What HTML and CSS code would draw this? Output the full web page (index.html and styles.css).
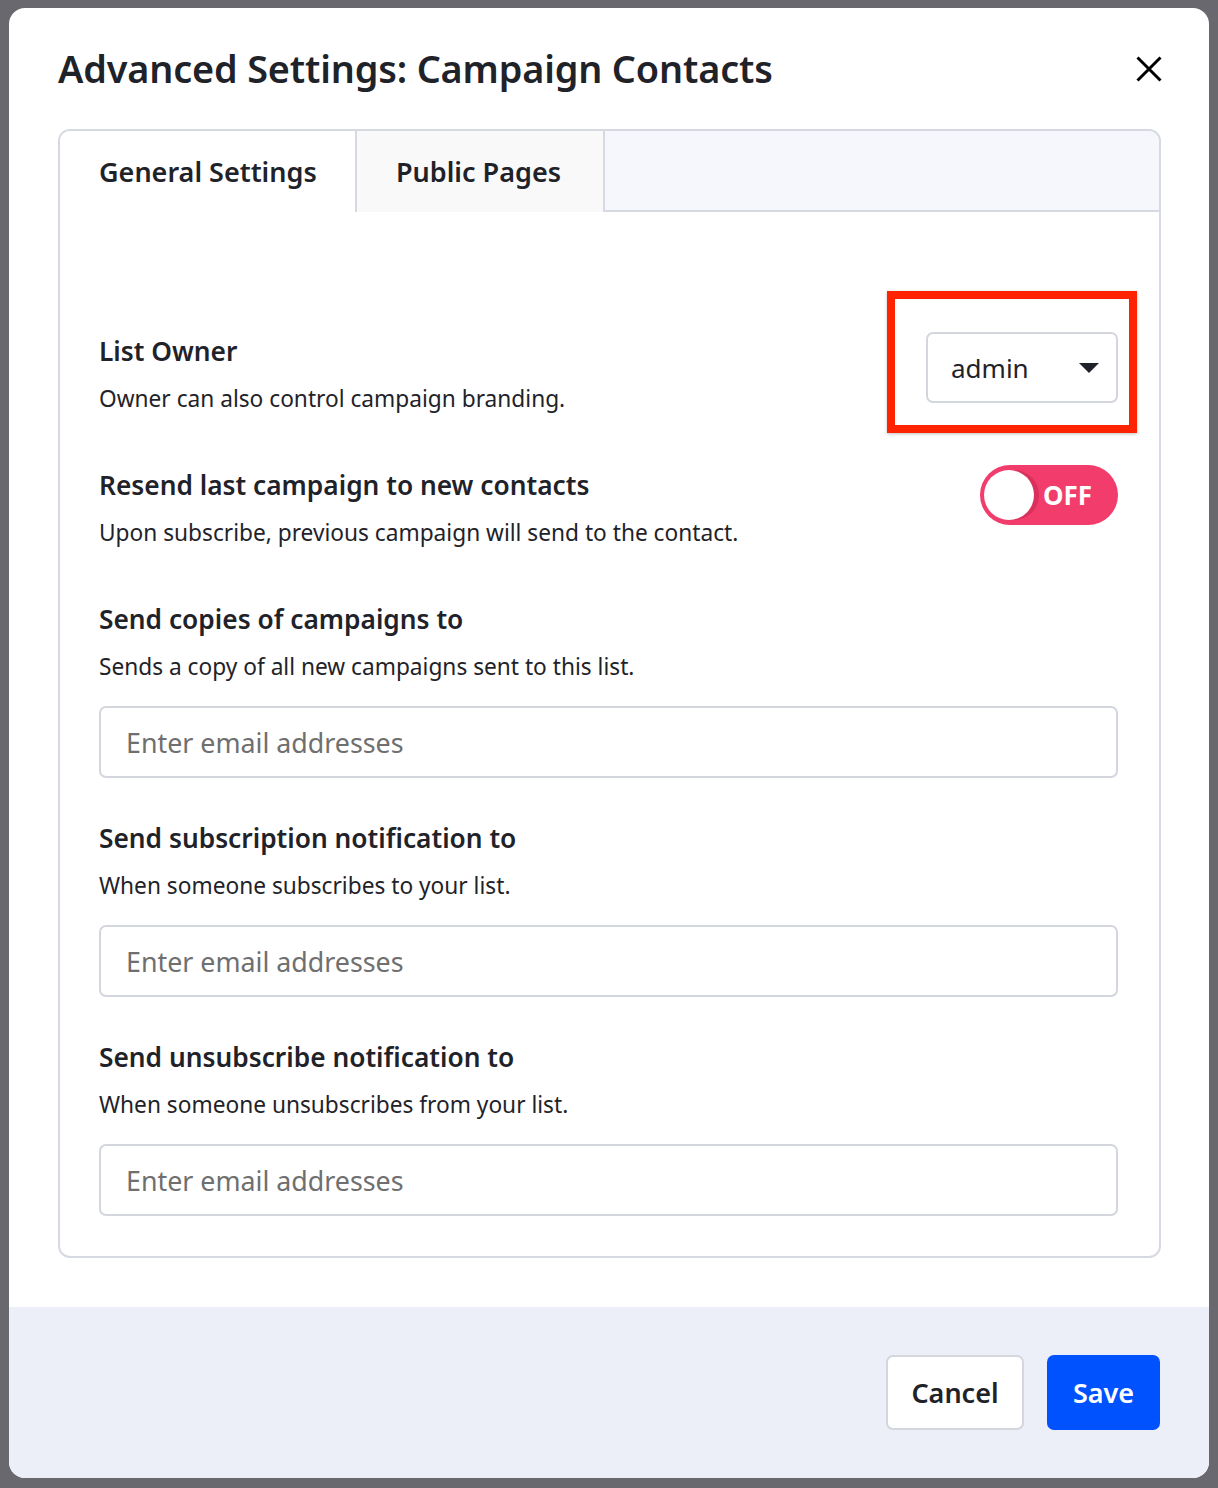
FILE: index.html
```html
<!DOCTYPE html>
<html lang="en">
<head>
  <meta charset="UTF-8" />
  <title>Advanced Settings: Campaign Contacts</title>
  <link rel="stylesheet" href="styles.css">
</head>
<body>
  <div class="modal">
    <header class="modal-head">
      <h1>Advanced Settings: Campaign Contacts</h1>
      <button class="close" aria-label="Close">
        <svg width="26" height="26" viewBox="0 0 26 26"><path d="M1.5 1.5 24.5 24.5M24.5 1.5 1.5 24.5" stroke="#000" stroke-width="3" fill="none"/></svg>
      </button>
    </header>

    <div class="tabs">
      <div class="tab-bar">
        <div class="tab active">General Settings</div>
        <div class="tab">Public Pages</div>
        <div class="tab-rest"></div>
      </div>

      <div class="tab-body">
        <!-- proprio -->
        <div class="setting row first">
          <div class="text">
            <h3>List Owner</h3>
            <p>Owner can also control campaign branding.</p>
          </div>
          <div class="select-wrap">
            <div class="select">
              <span>admin</span>
              <svg width="20" height="10" viewBox="0 0 20 10"><path d="M0 0h20L10 10z" fill="#1f2329"/></svg>
            </div>
            <div class="highlight"></div>
          </div>
        </div>

        <div class="setting row">
          <div class="text">
            <h3>Resend last campaign to new contacts</h3>
            <p>Upon subscribe, previous campaign will send to the contact.</p>
          </div>
          <div class="toggle">
            <span class="knob"></span>
            <span class="toggle-label">OFF</span>
          </div>
        </div>

        <div class="setting">
          <h3>Send copies of campaigns to</h3>
          <p>Sends a copy of all new campaigns sent to this list.</p>
          <input class="field" type="text" placeholder="Enter email addresses">
        </div>

        <div class="setting">
          <h3>Send subscription notification to</h3>
          <p>When someone subscribes to your list.</p>
          <input class="field" type="text" placeholder="Enter email addresses">
        </div>

        <div class="setting last">
          <h3>Send unsubscribe notification to</h3>
          <p>When someone unsubscribes from your list.</p>
          <input class="field" type="text" placeholder="Enter email addresses">
        </div>
      </div>
    </div>

    <footer class="modal-foot">
      <button class="btn btn-cancel">Cancel</button>
      <button class="btn btn-save">Save</button>
    </footer>
  </div>
</body>
</html>
```

FILE: styles.css
```css
*{margin:0;padding:0;box-sizing:border-box}
body{
  font-family:'Noto Sans','Open Sans',Arial,sans-serif;
  background:#68686e;
  color:#1f2329;
  padding:8px 9px 10px 9px;
}

.modal{width:1200px;height:1470px;background:#fff;border-radius:16px;overflow:hidden;display:flex;flex-direction:column}

.modal-head{display:flex;justify-content:space-between;align-items:flex-start;padding:39px 47px 0 49px;height:121px}
.modal-head h1{font-size:37.8px;font-weight:600;line-height:44px;letter-spacing:-.15px;color:#1f2329}
.close{background:none;border:none;margin-top:9px;cursor:pointer;width:26px;height:26px}
.close svg{display:block}

.tabs{margin:0 48px 0 49px;border:2px solid #d6d9e1;border-radius:12px;overflow:hidden}
.tab-bar{display:flex;height:81px;background:#f5f7fc}
.tab{display:flex;align-items:center;padding:0 0 0 39px;font-size:27px;font-weight:600;white-space:nowrap;background:#f9f9f9;border-right:2px solid #d6d9e1}
.tab.active{background:#fff;width:297px}
.tab:nth-child(2){width:248px;padding-left:39px}
.tab-rest{flex:1;border-bottom:2px solid #d6d9e1}

.tab-body{padding:122px 41px 40px 39px}
.setting h3{font-size:26.3px;font-weight:600;line-height:34px}
.setting p{font-size:22.7px;line-height:30px;margin-top:16px}
.setting{margin-bottom:43px}
.setting.row{display:flex;justify-content:space-between;align-items:flex-start;margin-bottom:54px}
.setting.first{margin-top:-2px;margin-bottom:52px}
.setting.last{margin-bottom:0}
.setting .text{padding-top:2px}

.select-wrap{position:relative}
.select{width:192px;height:71px;border:2px solid #d4d6de;border-radius:7px;display:flex;align-items:center;justify-content:space-between;padding:0 17px 0 23px;font-size:26px}
.highlight{position:absolute;top:-41px;left:-39px;right:-19px;bottom:-30px;border:8px solid #ff2400;box-shadow:0 1px 3px rgba(0,0,0,.25);pointer-events:none}

.toggle{position:relative;width:138px;height:60px;border-radius:30px;background:#f23c6c;display:flex;align-items:center;margin-top:-1px}
.knob{position:absolute;left:4px;top:5px;width:50px;height:50px;border-radius:50%;background:#fff;box-shadow:5px 0 0 #d9305c}
.toggle-label{margin-left:63px;color:#fff;font-size:26px;font-weight:700}

.field{display:block;width:100%;height:72px;margin-top:24px;border:2px solid #d4d6de;border-radius:7px;padding:0 25px;font-family:inherit;font-size:26.8px;color:#1f2329;outline:none}
.field::placeholder{color:#6f6f6f}

.modal-foot{margin-top:49px;flex:1;background:#eceff7;display:flex;justify-content:flex-end;align-items:flex-start;gap:23px;padding:48px 49px 0}
.btn{height:75px;border-radius:7px;font-family:inherit;font-size:27px;font-weight:600;cursor:pointer}
.btn-cancel{width:138px;background:#fff;border:2px solid #d4d6de;color:#1f2329}
.btn-save{width:113px;background:#0052ff;border:none;color:#fff}
```
